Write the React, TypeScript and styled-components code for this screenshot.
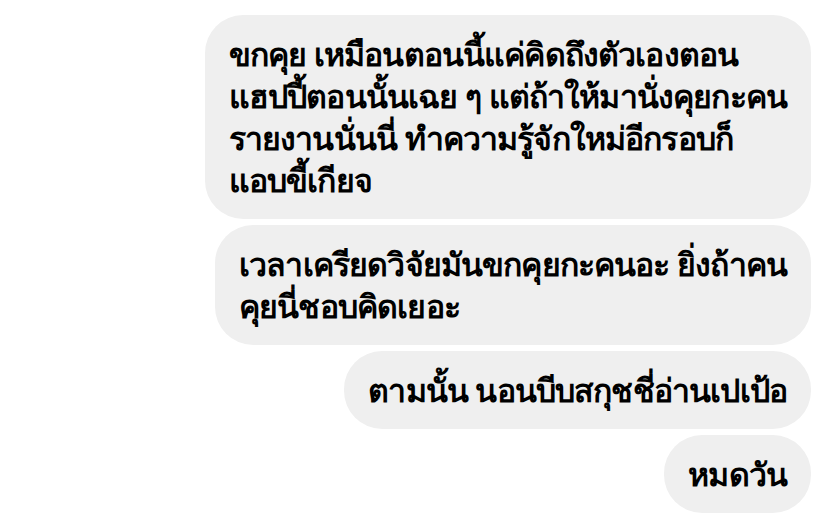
import React from "react";
import styled, { createGlobalStyle } from "styled-components";

const Global = createGlobalStyle`
  html, body { margin: 0; padding: 0; background: #ffffff; }
  body { font-family: "Noto Sans", "DejaVu Sans", sans-serif; }
`;

const Thread = styled.div`
  width: 828px;
  height: 520px;
  box-sizing: border-box;
  padding: 15px 17px 0 0;
  display: flex;
  flex-direction: column;
  align-items: flex-end;
  gap: 6px;
  overflow: hidden;
`;

const Bubble = styled.div`
  background: #efefef;
  border-radius: 38px;
  padding: 18px 24px;
  color: #000000;
  font-size: 32px;
  font-weight: 700;
  line-height: 42px;
  letter-spacing: -0.85px;
`;

const Line = styled.div`
  white-space: nowrap;
`;

const messages: string[][] = [
  [
    "ขกคุย เหมือนตอนนี้แค่คิดถึงตัวเองตอน",
    "แฮปปี้ตอนนั้นเฉย ๆ แต่ถ้าให้มานั่งคุยกะคน",
    "รายงานนั่นนี่ ทำความรู้จักใหม่อีกรอบก็",
    "แอบขี้เกียจ",
  ],
  ["เวลาเครียดวิจัยมันขกคุยกะคนอะ ยิ่งถ้าคน", "คุยนี่ชอบคิดเยอะ"],
  ["ตามนั้น นอนบีบสกุชชี่อ่านเปเป้อ"],
  ["หมดวัน"],
];

export default function App() {
  return (
    <>
      <Global />
      <Thread>
        {messages.map((lines, i) => (
          <Bubble key={i}>
            {lines.map((l, j) => (
              <Line key={j}>{l}</Line>
            ))}
          </Bubble>
        ))}
      </Thread>
    </>
  );
}
